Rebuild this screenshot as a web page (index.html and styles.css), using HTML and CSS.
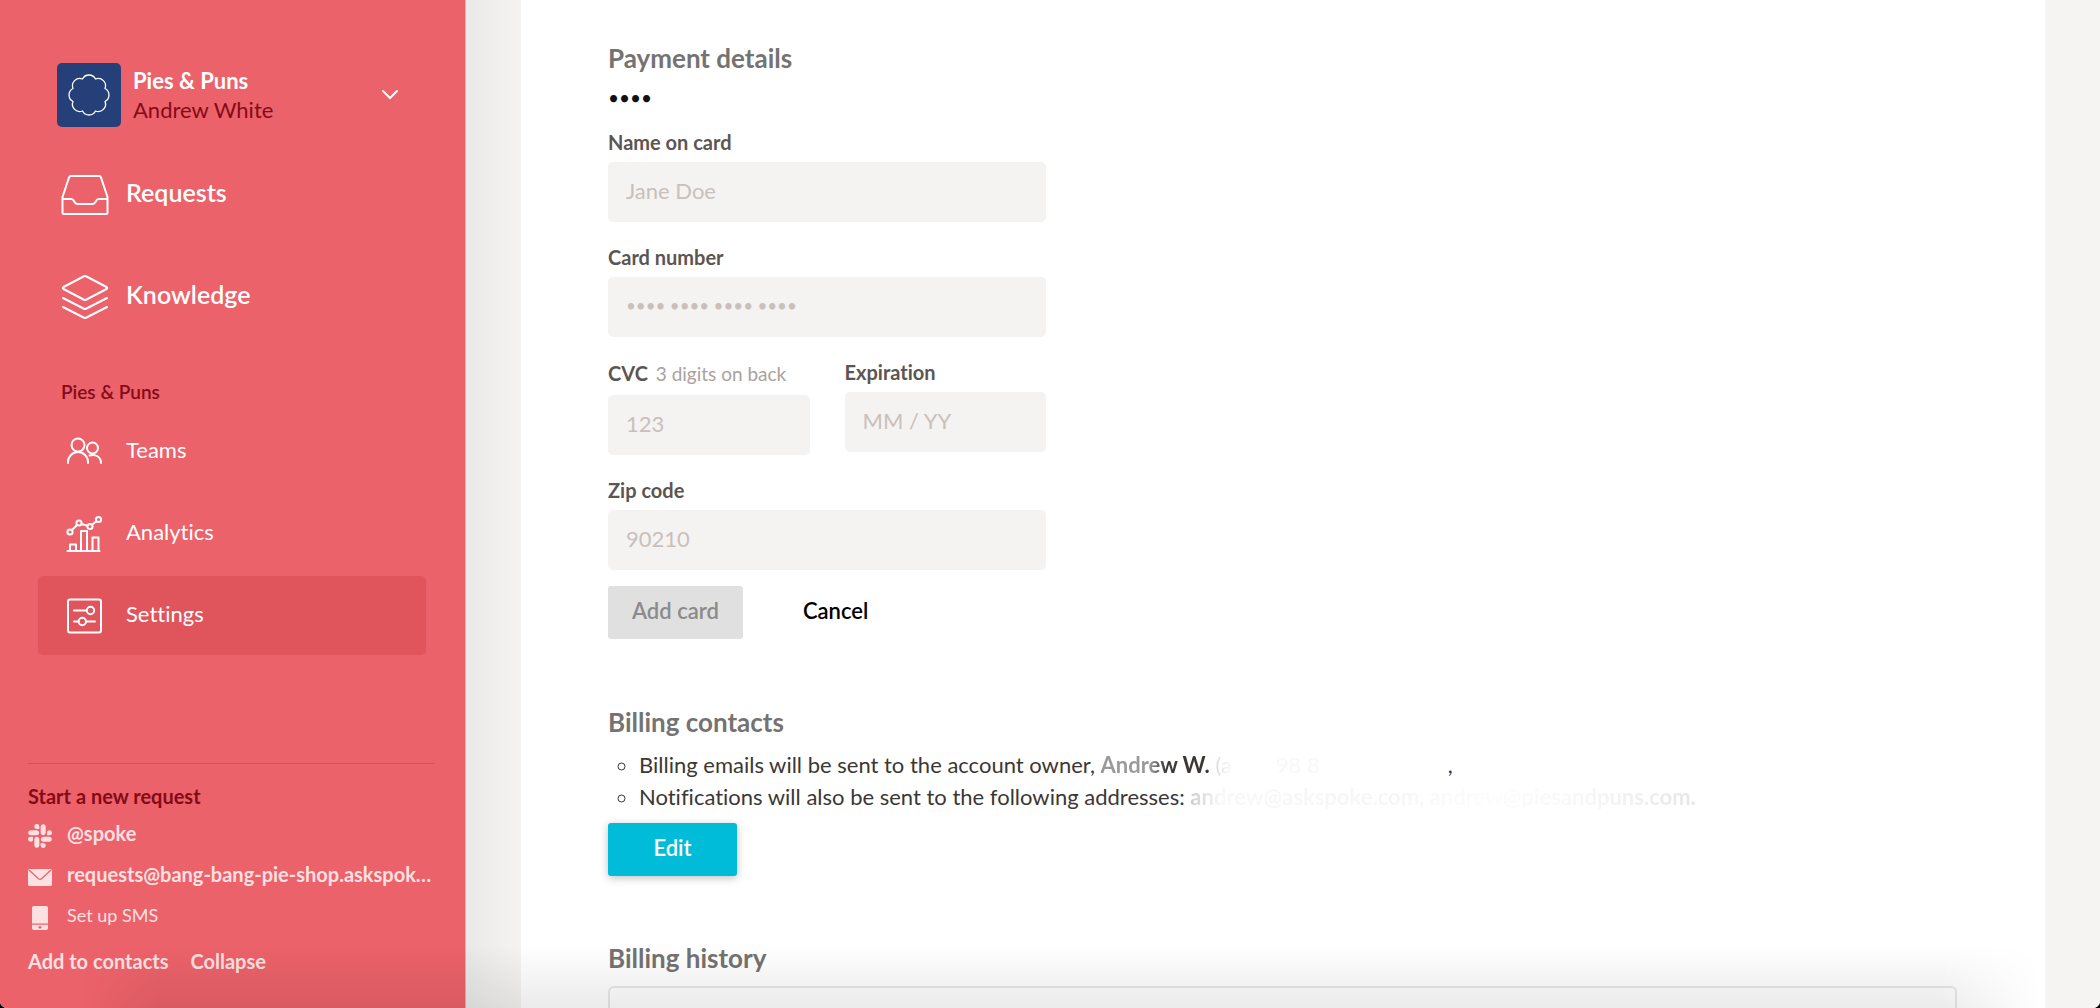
FILE: index.html
```html
<!DOCTYPE html>
<html lang="en">

<head>
  <meta charset="UTF-8">
  <meta name="viewport" content="width=device-width, initial-scale=1.0">
  <title>Billing settings</title>
  <link rel="stylesheet" href="styles.css">
</head>

<body>
  <div class="app">
    <aside class="sidebar">
      <button class="account" type="button">
        <span class="account_logo">
          <svg width="42" height="42" viewBox="0 0 42 42" fill="none" stroke="#fff" stroke-width="1.3" stroke-linejoin="round">
            <path d="M14.5 5A7.300 7.300 0 0 1 27.500 5A7.300 7.300 0 0 1 37 14.500A7.300 7.300 0 0 1 37 27.500A7.300 7.300 0 0 1 27.500 37A7.300 7.300 0 0 1 14.500 37A7.300 7.300 0 0 1 5 27.500A7.300 7.300 0 0 1 5 14.500A7.300 7.300 0 0 1 14.500 5Z" />
          </svg>
        </span>
        <span class="account_text">
          <strong>Pies &amp; Puns</strong>
          <span class="account_user">Andrew White</span>
        </span>
        <svg class="account_arrow" width="18" height="12" viewBox="0 0 18 12" fill="none" stroke="#fff" stroke-width="2" stroke-linecap="round">
          <path d="M2 2l7 7 7-7" />
        </svg>
      </button>

      <nav class="nav">
        <a class="nav_main" href="#">
          <svg width="48" height="44" viewBox="0 0 48 44" fill="none" stroke="#fff" stroke-width="2" stroke-linejoin="round">
            <path d="M1.500 24L8 4.500Q8.500 3 10 3H38Q39.500 3 40 4.500L46.500 24V39.500Q46.500 41 45 41H3Q1.500 41 1.500 39.500Z" />
            <path d="M1.500 26H10Q12 26 13 28L14 29.700Q15 31 16.500 31H31.500Q33 31 34 29.700L35 28Q36 26 38 26H46.500" />
          </svg>
          <span>Requests</span>
        </a>
        <a class="nav_main" href="#">
          <svg width="48" height="44" viewBox="0 0 48 44" fill="none" stroke="#fff" stroke-width="2" stroke-linejoin="round" stroke-linecap="round">
            <path d="M22.500 1.500Q24 .7 25.500 1.500L45.500 12Q47 13 45.500 14L25.500 24.500Q24 25.300 22.500 24.500L2.500 14Q1 13 2.500 12Z" />
            <path d="M2 23L22.500 33.500Q24 34.300 25.500 33.500L46 23" />
            <path d="M2 32L22.500 42.500Q24 43.300 25.500 42.500L46 32" />
          </svg>
          <span>Knowledge</span>
        </a>

        <h2 class="nav_title">Pies &amp; Puns</h2>

        <a class="nav_item" href="#">
          <svg width="38" height="38" viewBox="0 0 38 38" fill="none" stroke="#fff" stroke-width="2" stroke-linecap="round">
            <circle cx="13" cy="12" r="6.500" />
            <circle cx="27.500" cy="15" r="5.500" />
            <path d="M3 30V29a10 10 0 0 1 20 0V30" />
            <path d="M24.500 22.500c6-2 11.500 1.500 11.500 7.500" />
          </svg>
          <span>Teams</span>
        </a>
        <a class="nav_item" href="#">
          <svg width="38" height="38" viewBox="0 0 38 38" fill="none" stroke="#fff" stroke-width="2" stroke-linecap="round" stroke-linejoin="round">
            <circle cx="5" cy="17" r="2.600" />
            <circle cx="14" cy="8" r="2.600" />
            <circle cx="25" cy="11.500" r="2.600" />
            <circle cx="33.500" cy="4.500" r="2.600" />
            <path d="M7 15l5-5M16.500 9l6 1.800M27 9.800l4.500-3.600" />
            <path d="M2.500 36H34.500M5 36v-6.500h6V36M16 36V16h6V36M27.500 36V22.500h6V36" />
          </svg>
          <span>Analytics</span>
        </a>
        <a class="nav_item nav_item_active" href="#">
          <svg width="38" height="38" viewBox="0 0 38 38" fill="none" stroke="#fff" stroke-width="2" stroke-linecap="round">
            <rect x="3" y="2.500" width="33" height="33" rx="2" />
            <path d="M9 13.500H21.500M9 24.500H13.500M21 24.500H30" />
            <circle cx="25.500" cy="13.500" r="3.700" />
            <circle cx="17.300" cy="24.500" r="3.700" />
          </svg>
          <span>Settings</span>
        </a>
      </nav>

      <section class="request">
        <h2 class="request_title">Start a new request</h2>
        <a class="request_link" href="#">
          <svg width="24" height="24" viewBox="0 0 24 24" fill="currentColor">
            <path d="M5.040 15.170a2.530 2.530 0 1 1-2.520-2.520h2.520zM6.310 15.170a2.530 2.530 0 0 1 5.050 0v6.310a2.530 2.530 0 0 1-5.050 0z" />
            <path d="M8.830 5.040a2.530 2.530 0 1 1 2.530-2.520v2.520zM8.830 6.310a2.530 2.530 0 0 1 0 5.050H2.520a2.530 2.530 0 0 1 0-5.050z" />
            <path d="M18.960 8.830a2.530 2.530 0 1 1 2.520 2.530h-2.520zM17.690 8.830a2.530 2.530 0 0 1-5.050 0V2.520a2.530 2.530 0 0 1 5.050 0z" />
            <path d="M15.170 18.960a2.530 2.530 0 1 1-2.530 2.520v-2.520zM15.170 17.690a2.530 2.530 0 0 1 0-5.050h6.310a2.530 2.530 0 0 1 0 5.050z" />
          </svg>
          <strong>@spoke</strong>
        </a>
        <a class="request_link" href="#">
          <svg width="24" height="24" viewBox="0 0 24 24">
            <rect y="4" width="24" height="17" rx="1.500" fill="currentColor" />
            <path d="M1 5l9.500 8.700q1.500 1.200 3 0L23 5" fill="none" stroke="#e9616a" stroke-width="1.200" />
          </svg>
          <strong>requests@bang-bang-pie-shop.askspok&hellip;</strong>
        </a>
        <a class="request_link request_sms" href="#">
          <svg width="24" height="24" viewBox="0 0 24 24">
            <path d="M6 0h12q2 0 2 2v15.500H4V2q0-2 2-2zM4 18.800h16V22q0 2-2 2H6q-2 0-2-2z" fill="currentColor" />
            <circle cx="12" cy="21.300" r="1.400" fill="#e9616a" />
          </svg>
          <span>Set up SMS</span>
        </a>
        <div class="request_actions">
          <a href="#">Add to contacts</a>
          <a href="#">Collapse</a>
        </div>
      </section>
    </aside>

    <main class="page">
      <div class="panel">
        <h1 class="heading">Payment details</h1>
        <p class="card_dots">&bull;&bull;&bull;&bull;</p>

        <form class="card_form">
          <div class="field">
            <label for="card-name">Name on card</label>
            <input id="card-name" type="text" placeholder="Jane Doe">
          </div>
          <div class="field">
            <label for="card-number">Card number</label>
            <input class="input_dots" id="card-number" type="text" placeholder="&bull;&bull;&bull;&bull; &bull;&bull;&bull;&bull; &bull;&bull;&bull;&bull; &bull;&bull;&bull;&bull;">
          </div>
          <div class="field_row">
            <div class="field">
              <label class="label_hint" for="card-cvc">CVC <span>3 digits on back</span></label>
              <input id="card-cvc" type="text" placeholder="123">
            </div>
            <div class="field">
              <label for="card-exp">Expiration</label>
              <input id="card-exp" type="text" placeholder="MM / YY">
            </div>
          </div>
          <div class="field">
            <label for="card-zip">Zip code</label>
            <input id="card-zip" type="text" placeholder="90210">
          </div>
          <div class="form_actions">
            <button class="btn btn_add" type="submit" disabled>Add card</button>
            <button class="btn btn_cancel" type="button">Cancel</button>
          </div>
        </form>

        <h2 class="heading">Billing contacts</h2>
        <ul class="contacts">
          <li>Billing emails will be sent to the account owner, <strong class="owner">Andrew W.</strong> <span class="faded faded_owner">(a</span><span class="faded_digits">98 8</span><span class="owner_comma">,</span></li>
          <li>Notifications will also be sent to the following addresses: <strong class="faded faded_emails">andrew@askspoke.com, andrew@piesandpuns.com.</strong></li>
        </ul>
        <button class="btn btn_edit" type="button">Edit</button>

        <h2 class="heading">Billing history</h2>
        <div class="history"></div>
      </div>
    </main>
    <div class="bottom_shade"></div>
  </div>
</body>

</html>
```
FILE: styles.css
```css
* {
  box-sizing: border-box;
}

body {
  font-family: Lato, "Open Sans", sans-serif;
  font-size: 22px;
  font-variant-ligatures: none;
  color: #3b3734;
  background-color: #000;
  margin: 0;
}

a {
  color: inherit;
  text-decoration: none;
}

button,
input {
  font: inherit;
}

h1,
h2,
p,
ul {
  margin: 0;
  padding: 0;
}

.app {
  position: relative;
  display: flex;
  height: 100vh;
  overflow: hidden;
  background-color: #f5f4f2;
  border-radius: 0 0 7px 7px;
}

/* sidebar */
.sidebar {
  display: flex;
  flex-direction: column;
  flex: none;
  width: 466px;
  padding: 63px 30px 35px 28px;
  color: #fff;
  background-color: #ec626a;
  border-right: 1px solid #f3a5a8;
}

.account {
  display: flex;
  align-items: center;
  gap: 12px;
  padding: 0 36px 0 29px;
  border: 0;
  background: none;
  color: #fff;
  text-align: left;
}

.account_logo {
  display: flex;
  align-items: center;
  justify-content: center;
  width: 64px;
  height: 64px;
  border-radius: 5px;
  background-color: #254079;
}

.account_text {
  display: flex;
  flex-direction: column;
  flex: 1;
  line-height: 29px;
}

.account_user {
  color: #850a17;
}

.nav {
  padding-top: 28px;
}

.nav_main {
  display: flex;
  align-items: center;
  gap: 17px;
  height: 80px;
  margin-bottom: 22px;
  padding-left: 33px;
  font-size: 25px;
  font-weight: 600;
}

.nav_main span {
  padding-bottom: 6px;
}

.nav_title {
  margin: 41px 0 6px 33px;
  color: #850a17;
  font-size: 19px;
  font-weight: 600;
  line-height: 28px;
}

.nav_item {
  display: flex;
  align-items: center;
  gap: 23px;
  height: 79px;
  margin: 0 9px 3px 10px;
  padding-left: 27px;
  border-radius: 5px;
}

.nav_item span {
  padding-bottom: 4px;
}

.nav_item_active {
  background-color: #e0555c;
}

.request {
  display: flex;
  flex-direction: column;
  margin-top: auto;
  padding-top: 20px;
  border-top: 1px solid #cf545c;
  color: #fde0e1;
}

.request_title {
  margin-bottom: 7px;
  color: #850a17;
  font-size: 20px;
  line-height: 24px;
}

.request_link {
  display: flex;
  align-items: center;
  gap: 15px;
  height: 41px;
  font-size: 20px;
}

.request_sms {
  font-size: 18px;
}

.request_link svg {
  flex: none;
}

.request_link strong,
.request_link span {
  padding-bottom: 5px;
  white-space: nowrap;
}

.request_actions {
  display: flex;
  gap: 22px;
  padding-top: 11px;
  font-size: 20px;
  font-weight: bold;
  line-height: 24px;
}

/* main page */
.page {
  display: flex;
  flex: 1;
  padding: 0 55px;
  background: linear-gradient(to right, #e9e9e8, #f5f4f2 55px);
}

.panel {
  flex: 1;
  padding: 42px 88px 0 87px;
  background-color: #fff;
}

.heading {
  color: #757371;
  font-size: 26px;
  line-height: 32px;
}

.card_dots {
  padding: 12px 0 20px;
  color: #111;
  font-size: 19px;
  line-height: 24px;
}

.card_form {
  max-width: 438px;
  margin-bottom: 67px;
}

.field {
  display: flex;
  flex-direction: column;
  flex: 1;
  gap: 8px;
  min-width: 0;
  margin-bottom: 23px;
}

.field label {
  color: #5c5551;
  font-size: 20px;
  font-weight: bold;
  line-height: 24px;
}

.field .label_hint {
  line-height: 27px;
}

.label_hint span {
  margin-left: 3px;
  color: #aaa29e;
  font-size: 19px;
  font-weight: normal;
}

.field input {
  width: 100%;
  height: 60px;
  padding: 0 18px 4px;
  border: 0;
  border-radius: 5px;
  background-color: #f5f3f2;
}

.field input::placeholder {
  color: #c9c0bb;
}

.field .input_dots {
  font-size: 17px;
}

.field_row {
  display: flex;
  align-items: flex-start;
  gap: 35px;
}

.form_actions {
  display: flex;
  gap: 36px;
  margin-top: -7px;
}

.btn {
  height: 53px;
  padding: 0 24px 4px;
  border: 0;
  border-radius: 3px;
  font-weight: 600;
}

.btn_add {
  background-color: #e0e0e0;
  color: #8b8b8b;
}

.btn_cancel {
  background: none;
  color: #000;
}

.btn_edit {
  width: 129px;
  margin: 10px 0 66px;
  background-color: #00bcd8;
  color: #fff;
  box-shadow: 0 2px 8px rgba(0, 0, 0, .25);
}

.contacts {
  padding: 11px 0 0 31px;
  line-height: 32px;
  list-style: circle;
}

.owner {
  background: linear-gradient(to right, #999 45%, #3b3734 60%);
  -webkit-background-clip: text;
  background-clip: text;
  color: transparent;
}

.faded {
  -webkit-background-clip: text;
  background-clip: text;
  color: transparent;
}

.faded_owner {
  background-image: linear-gradient(to right, #d8d8d8, #fbfbfb);
}

.faded_digits {
  margin: 0 128px 0 44px;
  color: #f8f8f8;
}

.faded_emails {
  background-image: linear-gradient(to right, #ccc, #f8f8f8 6%, #f6f6f6 40%, #fdfdfd 60%, #f6f6f6 80%, #e6e6e6);
}

.history {
  height: 60px;
  margin-top: 12px;
  border: 2px solid #e8e8e8;
  border-radius: 6px;
}

.bottom_shade {
  position: absolute;
  right: 60px;
  bottom: 0;
  left: 80px;
  height: 64px;
  background: linear-gradient(to bottom, transparent, rgba(0, 0, 0, .08));
  -webkit-mask-image: linear-gradient(to right, transparent, #000 80px, #000 calc(100% - 100px), transparent);
  mask-image: linear-gradient(to right, transparent, #000 80px, #000 calc(100% - 100px), transparent);
  pointer-events: none;
}
```
